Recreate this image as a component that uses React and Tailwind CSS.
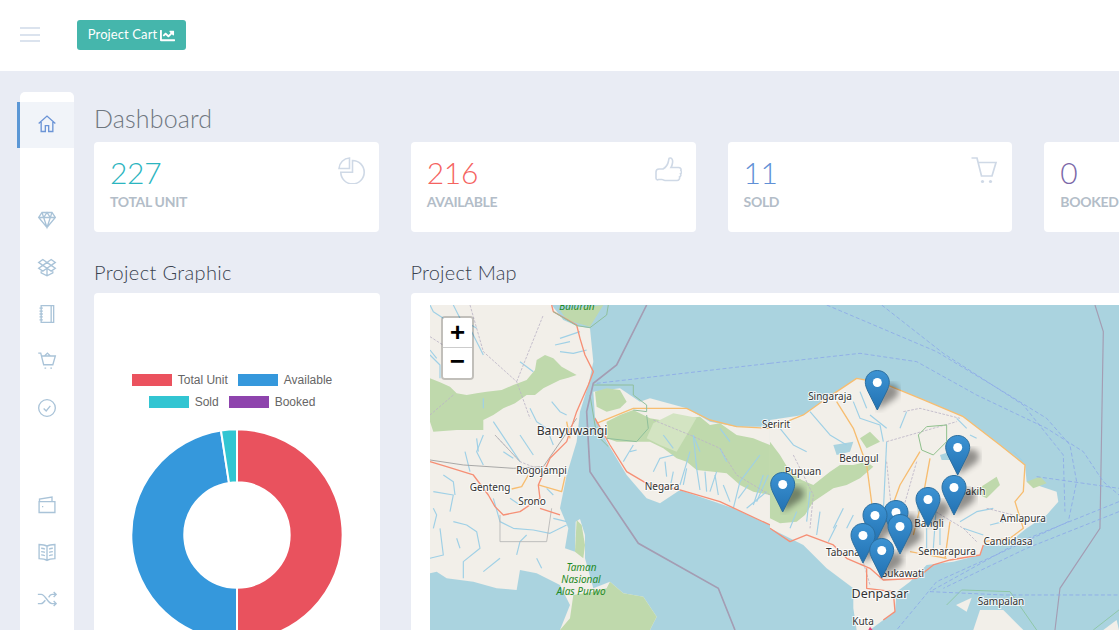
import React from 'react';
import { FaChartLine } from 'react-icons/fa';

const FONT = "font-['Lato',sans-serif]";

// sidebar icons
const icons = {
  home: 'M2 11.5 12 2.5l10 9 M5 9.5V21h5v-7h4v7h5V9.5',
  diamond: 'M6 3h12l4 6-10 12L2 9z M2 9h20 M8 9l4 12 4-12 M6 3l2 6 4-6 4 6 2-6',
  dropbox: 'M7 3 2 6.5 7 10l5-3.5z M17 3l5 3.5-5 3.5-5-3.5z M2 13.5 7 10l5 3.5L7 17z M22 13.5 17 10l-5 3.5 5 3.5z M5 17v2l7 3.5 7-3.5v-2 M12 15v7',
  notebook: 'M5 2h15v20H5z M17 2v20 M3 5h4 M3 8.5h4 M3 12h4 M3 15.5h4 M3 19h4',
  basket: 'M1.5 2.5h3l3.5 14h11l3-10.5H6 M9 6l3.5-3.5L16 6 M9 20.5h2 M16 20.5h2',
  check: 'M22 12a10 10 0 1 1-20 0 10 10 0 0 1 20 0z M8 12.5l3 3 5-6',
  wallet: 'M2.5 8h19v13h-19z M3 8V5l15-2.5V8 M6 14h1.5',
  book: 'M12 5C9 3 6 3 2.5 3v17c3.5 0 6.5 0 9.5 2 3-2 6-2 9.5-2V3C18 3 15 3 12 5z M12 5v17 M5 7.5c1.5 0 3 .2 4.5 1 M5 11.5c1.5 0 3 .2 4.5 1 M5 15.5c1.5 0 3 .2 4.5 1 M19 7.5c-1.5 0-3 .2-4.5 1 M19 11.5c-1.5 0-3 .2-4.5 1 M19 15.5c-1.5 0-3 .2-4.5 1',
  shuffle: 'M1 6.5h4c5 0 8 11 13 11h4.5 M1 17.5h4c2 0 3.5-2 5-4 M14 10c1-2 2.5-3.5 4-3.5h4.5 M20 3.5l3 3-3 3 M20 14.5l3 3-3 3',
};

function NavIcon({ d, className }) {
  return (
    <svg viewBox="0 0 24 24" className={`w-[20px] h-[20px] ${className}`} fill="none" stroke="currentColor" strokeWidth="1.6">
      <path d={d} />
    </svg>
  );
}

function NavItem({ icon, active }) {
  if (active) {
    return (
      <div className="h-[46px] mb-px -ml-[3px] border-l-[3px] border-[#5b97d5] bg-[#f1f4f9] flex items-center justify-center pb-[2px]">
        <NavIcon d={icons[icon]} className="text-[#6b94d6]" />
      </div>
    );
  }
  return (
    <div className="h-[47px] flex items-center justify-center">
      <NavIcon d={icons[icon]} className="text-[#a9c3d8]" />
    </div>
  );
}

function PieIcon() {
  return (
    <svg viewBox="0 0 27 27" className="w-[27px] h-[27px] text-[#cfd9e6]" fill="none" stroke="currentColor" strokeWidth="1.6">
      <path d="M14.5 3.5a11.7 11.7 0 1 1-11.700 11.700h11.700z" />
      <path d="M11.500 1A11 11 0 0 0 1 11.500h10.500z" />
    </svg>
  );
}

function ThumbIcon() {
  return (
    <svg viewBox="0 0 27 27" className="w-[27px] h-[27px] text-[#cfd9e6]" fill="none" stroke="currentColor" strokeWidth="1.6">
      <path d="M8 12c2.500-1.500 5-5 5.500-8S14 .8 15.500 1s2.500 2 2 5-1.500 4.500-1.500 4.500h7.500c2 0 3 1.500 2.300 3 1 .8 1 2.600-.3 3.300.7 1 .3 2.600-1 3.200.5 1.500-.5 3.500-2.500 3.500H10c-1.500 0-2-1-3-1H3.500C2 23.500 1 22 1 21v-6c0-2 1.500-3 3-3z" />
    </svg>
  );
}

function CartIcon() {
  return (
    <svg viewBox="0 0 27 27" className="w-[27px] h-[27px] text-[#cfd9e6]" fill="none" stroke="currentColor" strokeWidth="1.7">
      <path d="M.5 1H6l4.500 18H21l4-13.500H7" />
      <circle cx="11.500" cy="24.500" r="1.600" fill="currentColor" stroke="none" />
      <circle cx="19.500" cy="24.500" r="1.600" fill="currentColor" stroke="none" />
    </svg>
  );
}

function StatCard({ value, label, color, icon }) {
  return (
    <div className="w-[284.75px] h-[90px] shrink-0 bg-white rounded-[4px] flex justify-between pl-[16px] pr-[14px] pt-[15px]">
      <div>
        <div className={`text-[30px] leading-[32px] font-light tracking-[-0.3px] -mt-px ${color}`}>{value}</div>
        <div className="mt-[4px] text-[14px] leading-[20px] font-bold text-[#b3bdc8] tracking-[-0.3px] whitespace-nowrap">{label}</div>
      </div>
      {icon}
    </div>
  );
}

// donut slice between two angles (deg, clockwise from top)
function slice(a0, a1, r0, r1, cx, cy) {
  const pt = (a, r) => {
    const t = ((a - 90) * Math.PI) / 180;
    return `${cx + r * Math.cos(t)} ${cy + r * Math.sin(t)}`;
  };
  const large = a1 - a0 > 180 ? 1 : 0;
  return `M${pt(a0, r1)}A${r1} ${r1} 0 ${large} 1 ${pt(a1, r1)}L${pt(a1, r0)}A${r0} ${r0} 0 ${large} 0 ${pt(a0, r0)}Z`;
}

const legend = [
  [
    ['Total Unit', 'bg-[#eb525e]'],
    ['Available', 'bg-[#3598dc]'],
  ],
  [
    ['Sold', 'bg-[#32c5d2]'],
    ['Booked', 'bg-[#8e44ad]'],
  ],
];

function Donut() {
  const data = [
    [227, '#e9525e'],
    [216, '#3598dc'],
    [11, '#32c5d2'],
  ];
  const total = 454;
  let angle = 0;
  return (
    <svg viewBox="0 0 214 214" className="w-[214px] h-[214px] mx-auto mt-[20px]">
      {data.map(([v, c]) => {
        const a0 = angle;
        angle += (v / total) * 360;
        return <path key={c} d={slice(a0, angle, 52.700, 105.700, 107, 107)} fill={c} stroke="#fff" strokeWidth="2" />;
      })}
    </svg>
  );
}

const green = [
  // java
  'M30 250L60 262 90 275 110 295 140 300 170 295 200 290 245 285 280 270 320 255 345 225 350 195 375 180 400 190 425 215 470 240 445 248 420 255 370 280 345 300 320 300 285 325 250 340 220 360 190 375 190 405 110 405 40 410 30 380Z',
  'M420 45L550 30 510 95 440 75Z',
  'M460 900L520 890 560 880 570 860 610 895 670 905 710 965 690 1005 420 1005 450 970Z',
  'M470 675L485 690 495 750 490 790 465 770Z',
  // bali west
  'M525 290L560 280 600 285 620 320 600 340 560 350 530 335Z',
  'M560 430L560 380 600 360 640 345 690 370 750 380 800 370 840 365 870 390 900 385 950 420 1000 430 1050 450 1050 600 1000 590 960 570 920 535 880 530 830 525 800 500 770 490 730 460 690 440 650 440 590 440Z',
];
const paleGreen = ['M700 385L760 355 830 368 800 420 770 470 720 450 680 430Z'];
const green2 = [
  'M0 440L30 480 60 530 95 555 130 570 180 530 210 510 250 510 290 500 310 515 270 550 230 570 190 580 160 600 130 620 105 660 80 680 30 685 0 670Z',
  'M270 430L300 410 330 440 290 460Z',
  'M610 590L680 545 690 570 650 610Z',
  'M770 560L810 545 830 565 790 580Z',
];
const rivers = [
  'M30 180L60 210 60 250', 'M100 30L120 70 170 100', 'M155 110L175 150 190 180', 'M420 170L460 175 500 165', 'M395 320L420 350 440 360', 'M330 340L350 380 380 400 400 450',
  'M190 420L170 470 190 510', 'M135 470L150 530', 'M40 590L100 600 90 650', 'M60 700L70 780 30 790', 'M100 680L140 690 170 710 180 760 130 800 130 850',
  'M220 610L240 680 280 700 340 705 390 715 440 690', 'M240 790L190 830', 'M350 790L365 820', 'M300 420L340 480', 'M220 380L260 440 300 500',
  'M610 500L625 475 640 450', 'M700 530L720 490 760 480', 'M780 570L795 520 810 470', 'M840 585L830 520 820 420', 'M870 590L890 530', 'M940 640L960 560 1020 480', 'M980 640L1040 590', 'M900 400L930 440', 'M1000 630L1030 540',
  'M30 30L40 50 70 70', 'M30 165L50 190', 'M420 130L480 110', 'M405 150L450 140', 'M340 230L300 200', 'M190 310L190 340', 'M250 470L280 490', 'M170 430L175 470', 'M40 640L50 660 40 700', 'M110 730L120 760', 'M70 540L100 560 105 600', 'M400 670L440 680', 'M380 580L400 600', 'M270 610L300 630', 'M320 720L300 740 290 780',
  'M630 470L650 465', 'M735 500L740 545', 'M760 530L750 580', 'M800 520L790 570', 'M855 530L860 590', 'M885 540L895 600', 'M910 570L930 620', 'M955 610L985 570', 'M1010 620L1045 540', 'M820 420L840 470', 'M900 460L920 500', 'M730 420L760 460',
];
const rivers2 = [
  'M250 320L270 370 330 390 340 440', 'M120 590L110 680', 'M220 640L190 700', 'M30 400L70 450 110 470', 'M120 350L180 420 230 450',
  'M440 600L450 700', 'M500 620L490 760', 'M570 680L620 650 670 640', 'M580 700L640 720', 'M600 420L620 430', 'M730 470L760 500', 'M560 370L590 400', 'M350 440L340 650', 'M300 360L350 400',
  'M150 650L140 720', 'M60 700L80 650', 'M175 740L200 690', 'M230 700L250 660', 'M510 700L510 750', 'M470 700L470 770', 'M410 350L390 400', 'M270 290L290 340', 'M660 690L700 680',
];
const roadsRed = [
  'M30 500L80 515 160 540 205 600 225 635 250 660 300 650 360 610 355 570 390 490 440 440 470 350 505 270 520 230 495 180 480 130 470 90 400 50 395 30',
  'M360 640L420 660',
  'M525 370L570 450 620 530 680 565 780 585 900 620 1050 690',
];
const roadsRed2 = [
  'M0 700L60 740 110 720 190 750 230 790 300 820 340 855 440 850 490 810 540 795 630 780 640 750',
  'M290 820L290 880 370 890 375 950 340 975',
];
const roadsOrange = [
  'M530 385L640 340 800 340 870 375 950 395 1050 400',
  'M355 570L425 590 435 545',
  'M275 582L305 575 325 540',
  'M440 380L450 430',
];
const roadsOrange2 = [
  'M0 400L100 360 170 310 260 250 340 265 450 310 580 365 690 450 765 510 760 590 735 620 760 700 720 730 640 740',
  'M200 320L250 400 290 510 310 660',
  'M450 470L390 570 350 680',
  'M480 490L460 600 430 720',
  'M540 680L525 790',
  'M420 770L530 790',
];
const admin = [
  'M150 30L190 170 290 260 330 370', 'M290 260L370 60', 'M30 125L100 170', 'M225 420L300 500 350 520', 'M700 375L810 420 900 460 950 540 1050 600', 'M30 360L100 300',
];
const admin2 = [
  'M70 480L130 600 120 700', 'M350 440L560 380', 'M400 350L450 340 570 370', 'M350 500L370 700', 'M440 500L400 640', 'M250 700L300 870', 'M620 740L580 700 480 640', 'M650 640L730 660',
];
const dashes = [
  'M0 205L270 175 440 200 620 300 830 400 940 470 1000 560 1047 600',
  'M170 30L500 170 700 290 830 370 900 450 920 560 895 680 700 770 500 860 380 1005',
  'M335 30L520 175 760 330 880 480 885 650',
  'M800 545L1047 580',
  'M1047 620L750 740 480 890',
  'M1047 650L770 760 520 880',
  'M480 890L700 900 1047 900',
];

const labels = [
  ['Banyuwangi', 572, 432, 12.200],
  ['Rogojampi', 541.500, 471, 10],
  ['Genteng', 490, 488, 10],
  ['Srono', 532, 502, 10],
  ['Negara', 662, 487, 10],
  ['Singaraja', 830, 397, 10],
  ['Seririt', 776, 425, 10],
  ['Bedugul', 859, 459, 10],
  ['Pupuan', 803, 472, 10],
  ['Bangli', 929, 524, 10],
  ['Besakih', 967, 492.500, 10],
  ['Amlapura', 1023, 519, 10],
  ['Candidasa', 1008, 542, 10],
  ['Semarapura', 947, 552, 10],
  ['Tabanan', 846, 553, 10],
  ['Sukawati', 903, 574, 10],
  ['Denpasar', 880, 595, 12.500],
  ['Sampalan', 1001, 602, 10],
  ['Kuta', 863, 622, 10],
];
const parkLabels = [
  ['Baluran', 577, 307],
  ['Taman', 581.500, 568],
  ['Nasional', 581, 580],
  ['Alas Purwo', 581, 592],
];

const markers = [
  [877.300, 410],
  [782.700, 512],
  [957.700, 475],
  [954, 515],
  [928, 527],
  [896, 540],
  [875, 543],
  [900, 554],
  [863, 563],
  [881.700, 578],
];

function Lines({ list, color, width, dash }) {
  return list.map((d) => <path key={d} d={d} fill="none" stroke={color} strokeWidth={width} strokeDasharray={dash} strokeLinejoin="round" />);
}

function BaliMap() {
  return (
    <svg viewBox="430 305 689 325" className="w-[689px] h-[325px] block">
      <defs>
        <linearGradient id="pin" x1="0" y1="0" x2="0" y2="1">
          <stop offset="0" stopColor="#3d93d3" />
          <stop offset="1" stopColor="#2272b3" />
        </linearGradient>
        <filter id="soft">
          <feGaussianBlur stdDeviation="3" />
        </filter>
        <filter id="tile" x="0" y="0" width="1" height="1">
          <feGaussianBlur stdDeviation="0.4" />
        </filter>
      </defs>
      <rect x="430" y="305" width="689" height="325" fill="#aad3df" />

      <g filter="url(#tile)">
        {/* java + west bali */}
        <g transform="translate(420 295) scale(0.3333)">
          <path fill="#f2efe9" d="M30 30L395 30 430 75 470 92 510 100 520 200 505 270 480 350 470 440 440 540 420 640 445 700 435 760 465 770 467 680 480 672 495 720 495 790 520 880 570 860 610 895 670 905 710 965 690 1005 420 1005 450 930 420 870 350 835 300 825 290 885 230 880 160 860 80 850 50 830 30 835Z" />
          <path fill="#f2efe9" d="M525 365L520 290 600 280 660 320 690 310 800 340 870 380 950 395 1050 395 1050 690 940 640 780 585 720 625 680 610 620 540 560 440Z" />
          {green.map((d) => <path key={d} d={d} fill="#bfd9ac" />)}
          {paleGreen.map((d) => <path key={d} d={d} fill="#d3e4c2" />)}
          <Lines list={rivers} color="#9fd0e6" width="3.500" />
          <Lines list={admin} color="#bcb4c6" width="2.500" dash="8 4" />
          <path d="M240 660L240 740 380 740 395 640 M225 420L300 500" fill="none" stroke="#b5b5b5" strokeWidth="2.500" />
          <path d="M30 495L130 510 280 520 370 515 470 370" fill="none" stroke="#9a9a9a" strokeWidth="2.500" />
          <Lines list={roadsOrange} color="#f7bd70" width="4" />
          <Lines list={roadsRed} color="#f68f75" width="4" />
          <path d="M565 30L560 60 510 98 470 92 400 50M520 270L640 270 640 300 680 330 680 350 640 345M510 300L530 420 565 455M560 430L650 440 685 400 680 360" fill="none" stroke="#8fbf9c" strokeWidth="3" />
          <path d="M680 30L590 210 520 265 500 350 510 530 655 745 895 880 945 1005" fill="none" stroke="#a49db3" strokeWidth="5" />
          <path d="M530 265L1050 205" fill="none" stroke="#8ca8e8" strokeWidth="2.500" strokeDasharray="12 7" />
        </g>

        {/* east bali */}
        <g transform="translate(770 295) scale(0.3333)">
          <path fill="#f2efe9" d="M0 375L100 360 170 310 260 250 340 265 450 310 580 365 690 450 765 510 770 560 860 590 865 620 830 660 770 700 720 740 640 750 630 780 550 800 470 810 420 860 380 890 375 950 340 975 300 1005 260 1005 250 940 250 880 170 820 100 750 0 700Z" />
          <path fill="#f2efe9" d="M610 1005L630 945 700 945 760 1005Z" />
          <path fill="#f2efe9" d="M558 930L605 908 590 950Z" />
          <path fill="#f2efe9" d="M1000 1005L1040 975 1047 1005Z" />
          {green2.map((d) => <path key={d} d={d} fill="#bfd9ac" />)}
          <path d="M190 450L250 440 240 470 200 480Z M510 480L540 470 545 495 515 495Z" fill="#aad3df" />
          <Lines list={rivers2} color="#9fd0e6" width="3.500" />
          <Lines list={admin2} color="#bcb4c6" width="2.500" dash="8 4" />
          <Lines list={roadsOrange2} color="#f7bd70" width="4" />
          <Lines list={roadsRed2} color="#f68f75" width="4" />
          <path d="M445 420L470 395 530 390 530 440 490 480 455 465Z" fill="none" stroke="#8fc08c" strokeWidth="3" />
          <path d="M530 930L575 885 720 890 800 1005M970 1005L1047 945" fill="none" stroke="#8fc7a8" strokeWidth="3" />
          <path d="M975 30L1000 110 990 700 870 880 855 1005" fill="none" stroke="#a49db3" strokeWidth="3.500" />
          <Lines list={dashes} color="#8ca8e8" width="2.500" dash="12 7" />
          <path d="M295 1005L300 995 308 1005Z" fill="#e0457b" />
        </g>
      </g>

      {labels.map(([t, x, y, s]) => (
        <text key={t} x={x} y={y} fontSize={s} textAnchor="middle" dominantBaseline="middle" fill="#333" stroke="#fff" strokeOpacity="0.8" strokeWidth="2" paintOrder="stroke" fontFamily="'Noto Sans',sans-serif">{t}</text>
      ))}
      {parkLabels.map(([t, x, y]) => (
        <text key={t} x={x} y={y} fontSize="10" fontStyle="italic" textAnchor="middle" dominantBaseline="middle" fill="#1f8a26" fontFamily="'Noto Sans',sans-serif">{t}</text>
      ))}

      {markers.map(([x, y]) => (
        <path key={`s${x}`} d={`M${x} ${y}l18-12c6-5 4-14-6-14-6 0-12 6-12 26z`} fill="#000" opacity="0.4" filter="url(#soft)" />
      ))}
      {markers.map(([x, y]) => (
        <g key={x} transform={`translate(${x - 12.500} ${y - 40})`}>
          <path d="M12.500.5C5.600.5.500 5.800.500 12.300c0 3.200 1.200 5.700 2.500 8.700l9.500 19 9.500-19c1.300-3 2.500-5.500 2.500-8.700C24.500 5.800 19.400.5 12.500.5z" fill="url(#pin)" stroke="#2b6e9f" strokeWidth="1" />
          <circle cx="12.500" cy="12.500" r="4.500" fill="#fff" />
        </g>
      ))}
    </svg>
  );
}

export default function App() {
  return (
    <div className={`w-[1119px] h-[630px] overflow-hidden bg-[#e9ecf4] ${FONT}`}>
      {/* Topbar */}
      <div className="h-[71px] bg-white flex items-start pl-[20px]">
        <div className="mt-[27px] w-[20px] flex flex-col gap-[4.500px]">
          <span className="h-[2px] bg-[#dbe3ee]"></span>
          <span className="h-[2px] bg-[#dbe3ee]"></span>
          <span className="h-[2px] bg-[#dbe3ee]"></span>
        </div>
        <button className="ml-[37px] mt-[20px] w-[109px] h-[30px] bg-[#45b6ac] rounded-[3px] text-white text-[13px] tracking-[0.1px] flex items-center justify-center gap-[3px]">
          Project Cart <FaChartLine className="w-[15px] h-[15px]" />
        </button>
      </div>

      <div className="flex gap-[20px] pl-[20px] pt-[21px]">
        {/* Sidebar */}
        <div className="w-[54px] h-[538px] shrink-0 bg-white rounded-t-[5px] pt-[10px]">
          <NavItem icon="home" active />
          <div className="h-[47.500px]"></div>
          <NavItem icon="diamond" />
          <NavItem icon="dropbox" />
          <NavItem icon="notebook" />
          <NavItem icon="basket" />
          <NavItem icon="check" />
          <div className="h-[50px]"></div>
          <NavItem icon="wallet" />
          <NavItem icon="book" />
          <NavItem icon="shuffle" />
        </div>

        {/* Content */}
        <div className="w-[1100px] shrink-0">
          <h1 className="mt-[12px] mb-[10px] text-[25px] leading-[28px] font-light tracking-[0.15px] text-[#6f7780]">Dashboard</h1>
          <div className="flex gap-[32px]">
            <StatCard value="227" label="TOTAL UNIT" color="text-[#2bb5c0]" icon={<PieIcon />} />
            <StatCard value="216" label="AVAILABLE" color="text-[#f5635f]" icon={<ThumbIcon />} />
            <StatCard value="11" label="SOLD" color="text-[#5f90d6]" icon={<CartIcon />} />
            <StatCard value="0" label="BOOKED" color="text-[#7b68a8]" icon={<span />} />
          </div>

          <div className="mt-[27px] flex gap-[30.500px]">
            <div className="w-[286px] shrink-0">
              <h2 className="text-[20px] leading-[26px] font-light tracking-[0.35px] text-[#3a4350]">Project Graphic</h2>
              <div className="mt-[8px] h-[400px] bg-white rounded-[4px] pt-[81px]">
                <div className="flex flex-col gap-[10px] pr-[10px] text-[12px] leading-[12px] text-[#666] font-['Liberation_Sans',sans-serif]">
                  {legend.map((row, i) => (
                    <div key={i} className="flex justify-center gap-[10px]">
                      {row.map(([name, bg]) => (
                        <div key={name} className="flex items-center gap-[6px]">
                          <span className={`w-[40px] h-[12px] ${bg}`}></span>
                          {name}
                        </div>
                      ))}
                    </div>
                  ))}
                </div>
                <Donut />
              </div>
            </div>

            <div className="w-[760px] shrink-0">
              <h2 className="text-[20px] leading-[26px] font-light tracking-[0.2px] text-[#3a4350]">Project Map</h2>
              <div className="mt-[8px] h-[400px] bg-white rounded-[4px] pt-[12px] pl-[19.500px]">
                <div className="relative w-[689px]">
                  <BaliMap />
                  <div className="absolute left-[11px] top-[11px] w-[33px] border-2 border-black/20 rounded-[4px] bg-clip-padding font-['Liberation_Mono',monospace] font-bold text-[26px] text-black">
                    <div className="h-[30px] pt-[3px] bg-white rounded-t-[2px] border-b border-[#ccc] flex items-center justify-center">+</div>
                    <div className="h-[30px] bg-white rounded-b-[2px] flex items-center justify-center">−</div>
                  </div>
                </div>
              </div>
            </div>
          </div>
        </div>
      </div>
    </div>
  );
}
